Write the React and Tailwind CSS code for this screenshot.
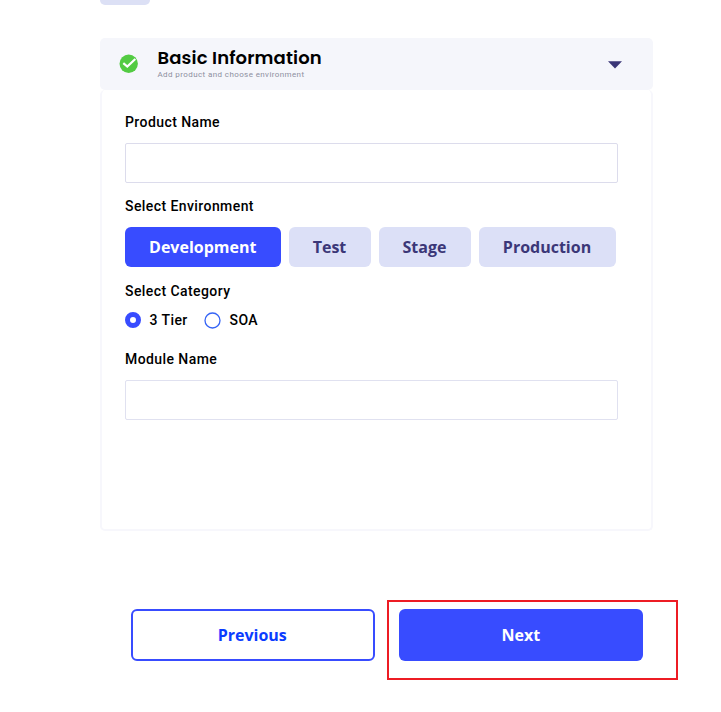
function Label({ children, className = "" }) {
  return <div className={`h-5 whitespace-nowrap font-[Roboto,sans-serif] text-[14px] font-medium leading-5 tracking-[0.42px] text-black ${className}`}>{children}</div>;
}

function Env({ label, className }) {
  return (
    <button className={`h-10 rounded-[6px] font-['Open_Sans',sans-serif] text-[16px] font-bold ${className}`}>{label}</button>
  );
}

export default function App() {
  return (
    <div className="h-[712px] w-[721px] overflow-hidden bg-white">
      <div className="ml-[99.5px] h-[5px] w-[50px] rounded-b-[5px] bg-[#dce0f5]" />
      <section className="ml-[100px] mt-[33px] h-[493px] w-[552.5px]">
        <header className="flex h-[52px] items-center rounded-[5px] bg-[#f5f6fb] pl-[19px] pr-[31px]">
          <svg width="20" height="20" viewBox="0 0 20 20">
            <circle cx="9.7" cy="9.8" r="9.2" fill="#53cb43" />
            <path d="M4.3 9.2 8.3 12.6 16.3 5" fill="none" stroke="white" strokeWidth="2.2" />
          </svg>
          <div className="-mt-[4px] ml-[18.5px] flex-1 whitespace-nowrap">
            <div className="font-[Poppins,Inter,sans-serif] text-[18px] font-semibold leading-[24px] tracking-[0.14px] text-black">Basic Information</div>
            <div className="font-[Roboto,sans-serif] text-[8px] leading-[9px] tracking-[0.4px] text-[#8d8fa0]">Add product and choose environment</div>
          </div>
          <svg className="mt-[2px]" width="14" height="8" viewBox="0 0 14 8"><path d="M0 .3h14L7 7.6z" fill="#3a3576" /></svg>
        </header>
        <div className="h-[441px] rounded-[5px] border-2 border-t-0 border-[#f7f7fc] pl-[23px] pt-[22px]">
          <Label>Product Name</Label>
          <input className="mt-[11px] block h-10 w-[493px] rounded-[2px] border border-[#dcdcec]" />
          <Label className="mt-[13px]">Select Environment</Label>
          <div className="mt-[11px] flex gap-2">
            <Env label="Development" className="w-[155.5px] bg-[#384cff] text-white" />
            <Env label="Test" className="w-[82px] bg-[#dce0f7] text-[#3b3778]" />
            <Env label="Stage" className="w-[92px] bg-[#dce0f7] text-[#3b3778]" />
            <Env label="Production" className="w-[137px] bg-[#dce0f7] text-[#3b3778]" />
          </div>
          <Label className="mt-[14px]">Select Category</Label>
          <div className="mt-[9px] flex h-5 items-center">
            <span className="h-4 w-4 rounded-full border-[5px] border-[#384cff]" />
            <Label className="ml-[8.5px] w-[54.5px]">3 Tier</Label>
            <svg className="h-[17px] w-[17px]" viewBox="0 0 17 17">
              <circle cx="8.5" cy="8.5" r="7.5" fill="none" stroke="#3564f5" strokeWidth="1.3" />
            </svg>
            <Label className="ml-[8.5px]">SOA</Label>
          </div>
          <Label className="mt-[19px]">Module Name</Label>
          <input className="mt-[11px] block h-[39.5px] w-[493px] rounded-[2px] border border-[#e0e1f0]" />
        </div>
      </section>
      <div className="mt-[69px] flex pl-[131px] font-['Open_Sans',sans-serif] text-[16px] font-bold">
        <button className="mt-[9px] h-[52px] w-[243.5px] rounded-[6px] border-2 border-[#384cff] pr-px text-[#0a3cff]">Previous</button>
        <div className="ml-[12.5px] h-[80px] w-[291px] border-2 border-[#ed1c24] pl-[10px] pt-[7px]">
          <button className="h-[52px] w-[243.5px] rounded-[6px] bg-[#384cff] text-white">Next</button>
        </div>
      </div>
    </div>
  );
}
